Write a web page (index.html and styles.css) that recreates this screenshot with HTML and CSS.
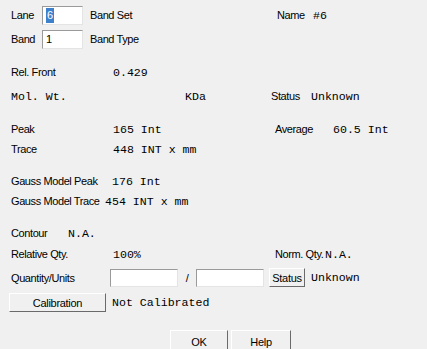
FILE: index.html
```html
<!DOCTYPE html>
<html>
  <head>
    <meta charset="UTF-8">
    <title>Band Properties</title>
    <link rel="stylesheet" href="styles.css">
  </head>
  <body>
    <div class="dialog">

      <!-- lane / band -->
      <div class="row row-first">
        <span class="lane-lbl">Lane</span>
        <div class="edit small-edit"><span class="sel">6</span></div>
        <span class="band-set">Band Set</span>
        <span class="name-lbl">Name</span>
        <span class="mono">#6</span>
      </div>
      <div class="row gap-xs">
        <span class="lane-lbl">Band</span>
        <div class="edit small-edit">1</div>
        <span class="band-set">Band Type</span>
      </div>

      <!-- front / weight -->
      <div class="row gap-lg">
        <span class="lbl">Rel. Front</span>
        <span class="mono">0.429</span>
      </div>
      <div class="row gap-xs">
        <span class="mono mol-lbl">Mol. Wt.</span>
        <span class="mono kda">KDa</span>
        <span class="status-lbl">Status</span>
        <span class="mono">Unknown</span>
      </div>

      <!-- peak / trace -->
      <div class="row gap-lg">
        <span class="lbl">Peak</span>
        <span class="mono peak-val">165 Int</span>
        <span class="avg-lbl">Average</span>
        <span class="mono">60.5 Int</span>
      </div>
      <div class="row">
        <span class="lbl">Trace</span>
        <span class="mono">448 INT x mm</span>
      </div>

      <!-- gauss model -->
      <div class="row gap-md">
        <span class="gauss-peak">Gauss Model Peak</span>
        <span class="mono">176 Int</span>
      </div>
      <div class="row">
        <span class="gauss-trace">Gauss Model Trace</span>
        <span class="mono">454 INT x mm</span>
      </div>

      <!-- contour / quantity -->
      <div class="row gap-md">
        <span class="contour-lbl">Contour</span>
        <span class="mono">N.A.</span>
      </div>
      <div class="row gap-xxs">
        <span class="lbl">Relative Qty.</span>
        <span class="mono rel-val">100%</span>
        <span class="norm-lbl">Norm. Qty.</span>
        <span class="mono">N.A.</span>
      </div>
      <div class="row row-qty">
        <span class="qty-lbl">Quantity/Units</span>
        <div class="edit qty-edit"></div>
        <span class="slash">/</span>
        <div class="edit qty-edit"></div>
        <button class="btn status-btn">Status</button>
        <span class="mono">Unknown</span>
      </div>
      <div class="row row-cal">
        <button class="btn cal-btn">Calibration</button>
        <span class="mono">Not Calibrated</span>
      </div>

      <div class="actions">
        <button class="btn ok-btn">OK</button>
        <button class="btn help-btn">Help</button>
      </div>
    </div>
  </body>
</html>
```

FILE: styles.css
```css
/* whole dialog */
html, body {
  margin: 0;
  padding: 0;
  background-color: #f0f0f0;
  overflow: hidden;
}

.dialog {
  width: 427px;
  height: 349px;
  padding-top: 5px;
  padding-left: 11px;
  box-sizing: border-box;
  font-family: "Liberation Sans", Arial, sans-serif;
  font-size: 11px;
  letter-spacing: -0.4px;
  color: #000;
}

.mono {
  font-family: "Liberation Mono", "Courier New", monospace;
  font-size: 11.6px;
  letter-spacing: 0;
  white-space: pre;
}

/* rows */
.row {
  display: flex;
  align-items: center;
  height: 20px;
  white-space: nowrap;
}
.row > span {
  flex-shrink: 0;
}
.gap-xxs { margin-top: 1px; }
.gap-xs { margin-top: 4px; }
.gap-md { margin-top: 12px; }
.gap-lg { margin-top: 13px; }

.row-qty {
  margin-top: 4px;
  height: 19px;
}
.row-cal {
  margin-top: 6px;
  margin-left: -2px;
  height: 19px;
}

/* label columns */
.lbl { width: 102px; }
.lane-lbl { width: 31px; }
.band-set { margin-left: 7px; width: 187px; }
.name-lbl { width: 36px; }
.mol-lbl { width: 174px; }
.kda { width: 86px; }
.status-lbl { width: 40px; }
.peak-val { width: 162px; }
.avg-lbl { width: 58px; }
.gauss-peak { width: 101px; }
.gauss-trace { width: 94px; }
.contour-lbl { width: 57px; }
.rel-val { width: 162px; }
.norm-lbl { width: 50px; }
.qty-lbl { width: 99px; }
.slash {
  width: 18px;
  text-align: center;
}

/* sunken edit boxes */
.edit {
  box-sizing: border-box;
  background-color: #fff;
  border: 1px solid;
  border-color: #9a9a9a #e4e4e4 #e4e4e4 #9a9a9a;
  height: 19px;
  padding-left: 3px;
  line-height: 17px;
  flex-shrink: 0;
}
.small-edit {
  width: 41px;
}
.qty-edit {
  width: 68px;
  height: 18px;
}
.sel {
  background-color: #3d80cc;
  color: #fff;
  padding: 1px 1px 2px 1px;
}

/* raised buttons */
.btn {
  box-sizing: border-box;
  margin: 0;
  padding: 0;
  background-color: #f0f0f0;
  border: 1px solid;
  border-color: #fff #6a6a6a #6a6a6a #fff;
  font-family: "Liberation Sans", Arial, sans-serif;
  font-size: 11px;
  letter-spacing: -0.3px;
  color: #000;
  height: 19px;
  flex-shrink: 0;
}
.status-btn {
  width: 36px;
  margin-left: 5px;
  margin-right: 6px;
}
.cal-btn {
  width: 97px;
  margin-right: 6px;
}

.actions {
  display: flex;
  gap: 3px;
  margin-top: 18px;
  margin-left: 159px;
}
.ok-btn { width: 58px; height: 24px; }
.help-btn { width: 60px; height: 24px; }
```
